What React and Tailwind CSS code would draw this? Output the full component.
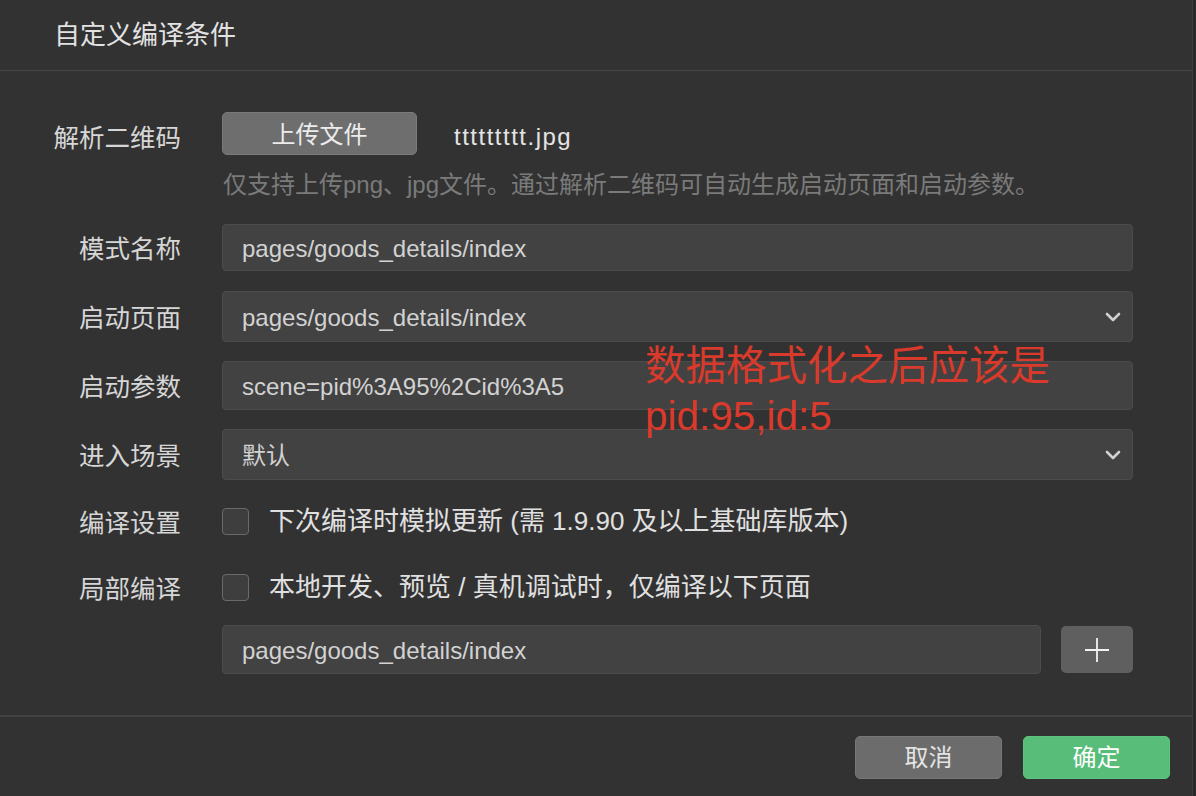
import React from "react";

const FONT = { fontFamily: '"Liberation Sans", "Noto Sans CJK SC", sans-serif' };

function Chevron() {
  return (
    <svg width="16" height="10" viewBox="0 0 16 10" className="shrink-0">
      <path d="M2 2 L8 8 L14 2" fill="none" stroke="#d0d0d0" strokeWidth="2.6" strokeLinecap="round" strokeLinejoin="round" />
    </svg>
  );
}

function Label({ children, extra }) {
  return (
    <div className={"w-[181px] shrink-0 text-right text-[25.5px] text-[#d6d6d6] leading-none " + (extra ? "pt-[11px]" : "pt-[5px]")}>
      {children}
    </div>
  );
}

function Field({ children, select }) {
  return (
    <div className="flex h-full flex-1 items-center justify-between rounded-[4px] border border-[#4c4c4c] bg-[#424242] pl-[19px] pr-[11px] text-[24px] text-[#d2d2d2]">
      <span className="pt-[2px]">{children}</span>
      {select ? <Chevron /> : null}
    </div>
  );
}

function Checkbox() {
  return <div className="h-[27px] w-[27px] shrink-0 rounded-[4px] border border-[#6a6a6a] bg-[#3e3e3e]" />;
}

export default function App() {
  return (
    <div style={FONT} className="flex h-[796px] w-[1196px] overflow-hidden bg-[#323232]">
      <div className="relative flex w-[1192px] flex-col">
        {/* header */}
        <div className="flex h-[71px] items-center border-b border-[#474747] pl-[54px] text-[26px] text-[#e2e2e2]">
          自定义编译条件
        </div>

        {/* body */}
        <div className="flex h-[644px] flex-col pr-[59px]">
          {/* row 1 */}
          <div className="mt-[41px] flex h-[43px] items-center gap-[41px]">
            <Label extra>解析二维码</Label>
            <div className="flex items-center">
              <button className="flex h-[43px] w-[195px] items-center justify-center rounded-[5px] border border-[#7a7a7a] bg-[#6e6e6e] pt-[3px] text-[24px] text-[#ececec]">
                上传文件
              </button>
              <span className="ml-[37px] pt-[6px] text-[24px] tracking-[1.5px] text-[#e4e4e4]">ttttttttt.jpg</span>
            </div>
          </div>
          <div className="mt-[14px] pl-[223px] text-[24px] leading-[32px] text-[#7a7a7a]">
            仅支持上传png、jpg文件。通过解析二维码可自动生成启动页面和启动参数。
          </div>

          {/* row 2 */}
          <div className="mt-[23px] flex h-[47px] items-center gap-[41px]">
            <Label>模式名称</Label>
            <Field>pages/goods_details/index</Field>
          </div>

          {/* row 3 */}
          <div className="mt-[20px] flex h-[51px] items-center gap-[41px]">
            <Label>启动页面</Label>
            <Field select>pages/goods_details/index</Field>
          </div>

          {/* row 4 */}
          <div className="mt-[19px] flex h-[49px] items-center gap-[41px]">
            <Label>启动参数</Label>
            <Field>scene=pid%3A95%2Cid%3A5</Field>
          </div>

          {/* row 5 */}
          <div className="mt-[19px] flex h-[51px] items-center gap-[41px]">
            <Label>进入场景</Label>
            <Field select>默认</Field>
          </div>

          {/* row 6 */}
          <div className="mt-[14px] flex h-[55px] items-center gap-[41px]">
            <Label>编译设置</Label>
            <div className="flex items-center gap-[20px]">
              <Checkbox />
              <span className="text-[26px] text-[#e0e0e0]">下次编译时模拟更新 (需 1.9.90 及以上基础库版本)</span>
            </div>
          </div>

          {/* row 7 */}
          <div className="mt-[11px] flex h-[55px] items-center gap-[41px]">
            <Label>局部编译</Label>
            <div className="flex items-center gap-[20px]">
              <Checkbox />
              <span className="text-[26px] text-[#e0e0e0]">本地开发、预览 / 真机调试时，仅编译以下页面</span>
            </div>
          </div>

          {/* row 8 */}
          <div className="mt-[10px] flex h-[49px] items-center gap-[41px]">
            <div className="w-[181px] shrink-0" />
            <div className="flex h-full flex-1 items-center gap-[20px]">
              <Field>pages/goods_details/index</Field>
              <button className="flex h-[47px] w-[72px] items-center justify-center rounded-[5px] bg-[#5f5f5f]">
                <svg width="26" height="26" viewBox="0 0 26 26">
                  <path d="M13 1 V25 M1 13 H25" stroke="#f2f2f2" strokeWidth="1.8" />
                </svg>
              </button>
            </div>
          </div>
        </div>

        {/* footer */}
        <div className="flex flex-1 items-start justify-end gap-[21px] border-t-2 border-[#434343] pr-[22px] pt-[19px]">
          <button className="flex h-[43px] w-[147px] items-center justify-center rounded-[5px] border border-[#777777] bg-[#6c6c6c] text-[24px] text-[#e4e4e4]">
            取消
          </button>
          <button className="flex h-[43px] w-[147px] items-center justify-center rounded-[5px] border border-[#5dc47f] bg-[#57bd79] text-[24px] text-white">
            确定
          </button>
        </div>

        {/* red annotation overlay */}
        <div className="absolute left-[645px] top-[341px] text-[40.5px] leading-[50px] text-[#d93a2b]">
          <div>数据格式化之后应该是</div>
          <div>pid:95,id:5</div>
        </div>
      </div>
      <div className="w-[4px] border-l border-[#3c3c3c] bg-[#2a2a2a]" />
    </div>
  );
}
